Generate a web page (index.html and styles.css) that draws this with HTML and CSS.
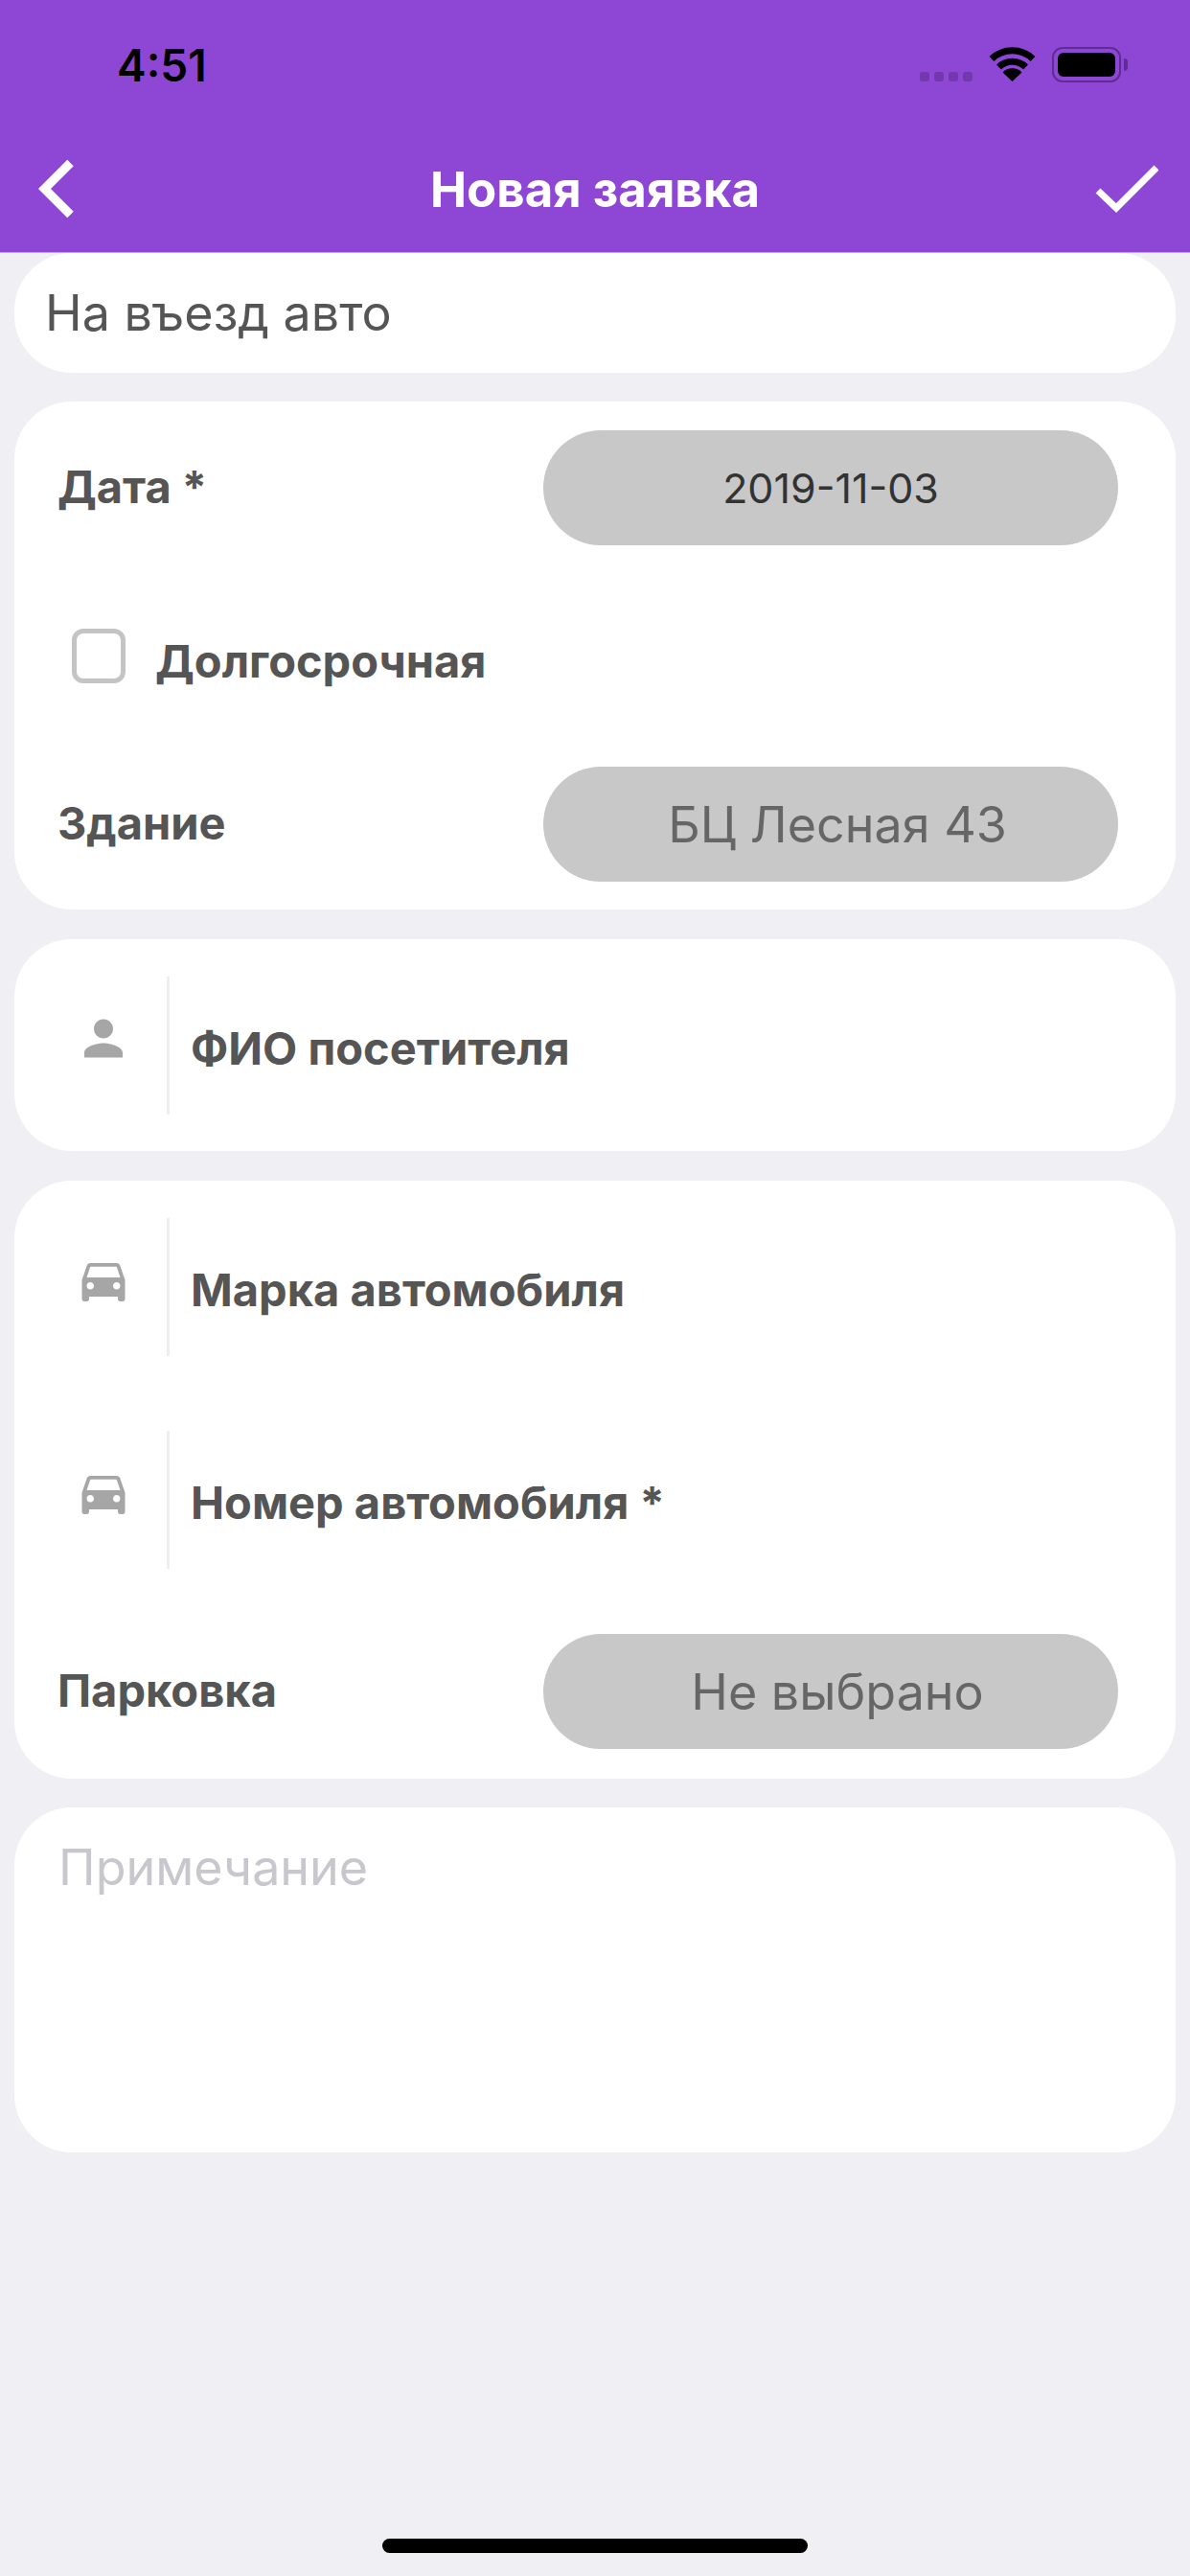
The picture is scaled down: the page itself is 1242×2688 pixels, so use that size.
FILE: index.html
```html
<!DOCTYPE html>
<html lang="ru">
<head>
<meta charset="utf-8">
<title>Новая заявка</title>
<link rel="stylesheet" href="styles.css">
</head>
<body>
<div class="app">
  <header class="header">
    <div class="status">
      <span class="time">4:51</span>
      <div class="status-icons">
        <div class="signal"><i></i><i></i><i></i><i></i></div>
        <svg class="wifi" width="49" height="36" viewBox="0 0 49 36"><path d="M3 12.5A31 31 0 0 1 46 12.5" fill="none" stroke="#000" stroke-width="7"/><path d="M10.500 21A20 20 0 0 1 38.500 21" fill="none" stroke="#000" stroke-width="7"/><path d="M24.500 36L14.500 26.500A14 14 0 0 1 34.500 26.500Z" fill="#000"/></svg>
        <div class="battery"><div class="battery-fill"></div></div>
        <div class="battery-cap"></div>
      </div>
    </div>
    <nav class="nav">
      <svg class="back" width="40" height="62" viewBox="0 0 40 62"><path d="M35.500 4L8.500 31L35.500 58" fill="none" stroke="#fff" stroke-width="9.200"/></svg>
      <h1 class="title">Новая заявка</h1>
      <svg class="check" width="68" height="52" viewBox="0 0 68 52"><path d="M5 27L24 45L66 3" fill="none" stroke="#fff" stroke-width="7"/></svg>
    </nav>
  </header>
  <main class="form">
    <section class="card card-subject"><span class="subject">На въезд авто</span></section>
    <section class="card card-main">
      <div class="row-select"><span class="label">Дата *</span><div class="pill pill-date">2019-11-03</div></div>
      <div class="row-check"><span class="checkbox"></span><span class="label">Долгосрочная</span></div>
      <div class="row-select"><span class="label">Здание</span><div class="pill pill-muted">БЦ Лесная 43</div></div>
    </section>
    <section class="card card-visitor">
      <div class="row-icon">
        <div class="icon-cell"><svg class="person" width="40" height="41" viewBox="4 4 16 16"><path d="M12 12c2.210 0 4-1.790 4-4s-1.790-4-4-4-4 1.790-4 4 1.790 4 4 4zm0 2c-2.670 0-8 1.340-8 4v2h16v-2c0-2.660-5.330-4-8-4z" fill="#a6a6a6"/></svg></div>
        <span class="label">ФИО посетителя</span>
      </div>
    </section>
    <section class="card card-car">
      <div class="row-icon">
        <div class="icon-cell"><svg class="car" width="46" height="40" viewBox="3 5 18 16"><path d="M18.920 6.010C18.720 5.420 18.160 5 17.500 5h-11c-.66 0-1.210.42-1.420 1.010L3 12v8c0 .55.45 1 1 1h1c.55 0 1-.45 1-1v-1h12v1c0 .55.45 1 1 1h1c.55 0 1-.45 1-1v-8l-2.080-5.990zM6.500 16c-.83 0-1.500-.67-1.500-1.500S5.670 13 6.500 13s1.500.67 1.500 1.500S7.330 16 6.500 16zm11 0c-.83 0-1.500-.67-1.500-1.500s.67-1.500 1.500-1.500 1.500.67 1.500 1.500-.67 1.500-1.500 1.500zM5 11l1.500-4.500h11L19 11H5z" fill="#a6a6a6"/></svg></div>
        <span class="label">Марка автомобиля</span>
      </div>
      <div class="row-icon row-icon-next">
        <div class="icon-cell"><svg class="car" width="46" height="40" viewBox="3 5 18 16"><path d="M18.920 6.010C18.720 5.420 18.160 5 17.500 5h-11c-.66 0-1.210.42-1.420 1.010L3 12v8c0 .55.45 1 1 1h1c.55 0 1-.45 1-1v-1h12v1c0 .55.45 1 1 1h1c.55 0 1-.45 1-1v-8l-2.080-5.990zM6.500 16c-.83 0-1.500-.67-1.500-1.500S5.670 13 6.500 13s1.500.67 1.500 1.500S7.330 16 6.500 16zm11 0c-.83 0-1.500-.67-1.500-1.500s.67-1.500 1.500-1.500 1.500.67 1.500 1.500-.67 1.500-1.500 1.500zM5 11l1.500-4.500h11L19 11H5z" fill="#a6a6a6"/></svg></div>
        <span class="label">Номер автомобиля *</span>
      </div>
      <div class="row-select row-parking"><span class="label">Парковка</span><div class="pill pill-muted">Не выбрано</div></div>
    </section>
    <section class="card card-note"><span class="placeholder">Примечание</span></section>
  </main>
  <div class="home-indicator"></div>
</div>
</body>
</html>
```

FILE: styles.css
```css
* { box-sizing: border-box; margin: 0; padding: 0; }
html, body { width: 1242px; height: 2688px; overflow: hidden; }
body { background: #efeff4; font-family: Inter, "Liberation Sans", sans-serif; }
.app { width: 1242px; height: 2688px; display: flex; flex-direction: column; }

.header { height: 264px; background: #8e47d4; border-bottom: 1px solid #b3b3b8; display: flex; flex-direction: column; }
.status { height: 150px; padding: 46px 65px 0 122px; display: flex; justify-content: space-between; align-items: flex-start; }
.time { font-size: 46px; line-height: 44px; font-weight: 600; color: #000; }
.status-icons { display: flex; align-items: flex-start; padding-top: 3px; }
.signal { display: flex; gap: 5px; margin-top: 26px; margin-right: 17px; }
.signal i { width: 10px; height: 10px; border-radius: 3px; background: #7438ae; }
.wifi { display: block; margin-right: 17px; }
.battery { width: 72px; height: 37px; padding: 4px; border: 2px solid #5f2c92; border-radius: 11px; }
.battery-fill { height: 25px; background: #000; border-radius: 6px; }
.battery-cap { width: 4px; height: 13px; margin: 12px 0 0 3px; background: #5f2c92; border-radius: 0 6px 6px 0; }
.nav { flex: 1; padding: 0 33px 0 38px; display: flex; justify-content: space-between; align-items: flex-start; position: relative; }
.back { display: block; margin-top: 16px; }
.check { display: block; margin-top: 22px; }
.title { position: absolute; left: 0; right: 0; top: 20px; text-align: center; font-size: 51px; line-height: 56px; font-weight: 700; color: #fff; }

.form { padding: 0 15px; display: flex; flex-direction: column; }
.card { background: #fff; border-radius: 60px; }
.card-subject { height: 125px; padding-left: 32px; display: flex; align-items: center; }
.subject { font-size: 52px; color: #555; }
.card-main { height: 530px; margin-top: 30px; padding: 30px 60px 0 45px; }
.card-visitor { height: 221px; margin-top: 31px; padding-top: 39px; }
.card-car { height: 624px; margin-top: 31px; padding-top: 39px; }
.card-note { height: 360px; margin-top: 30px; padding: 31px 46px 0; }

.row-select { display: flex; justify-content: space-between; align-items: center; height: 120px; }
.row-select .label { padding-bottom: 4px; }
.row-check { height: 231px; display: flex; align-items: center; padding: 0 0 0 15px; gap: 31px; }
.row-check .label { padding-top: 9px; }
.row-parking { margin: 68px 60px 0 45px; }
.label { font-size: 47px; font-weight: 700; color: #555; white-space: nowrap; }
.checkbox { width: 56px; height: 57px; border: 5px solid #c4c4c4; border-radius: 12px; background: #fff; }
.pill { width: 600px; height: 120px; border-radius: 60px; background: #c8c8c8; display: flex; align-items: center; justify-content: center; }
.pill-date { font-size: 43px; color: #333; }
.pill-muted { font-size: 52px; color: #666; padding-left: 14px; }

.row-icon { height: 144px; display: flex; align-items: center; }
.row-icon .label { padding-top: 5px; }
.row-icon-next { margin-top: 78px; }
.icon-cell { width: 162px; height: 100%; padding: 44px 46px 0 0; border-right: 3px solid #eee; display: flex; justify-content: flex-end; align-items: flex-start; margin-right: 22px; }
.icon-cell .car { margin-top: 3px; margin-right: -3px; }
.placeholder { font-size: 52px; color: #c7c7cd; }

.home-indicator { margin: auto 0 24px 399px; width: 444px; height: 15px; border-radius: 8px; background: #000; }
```
